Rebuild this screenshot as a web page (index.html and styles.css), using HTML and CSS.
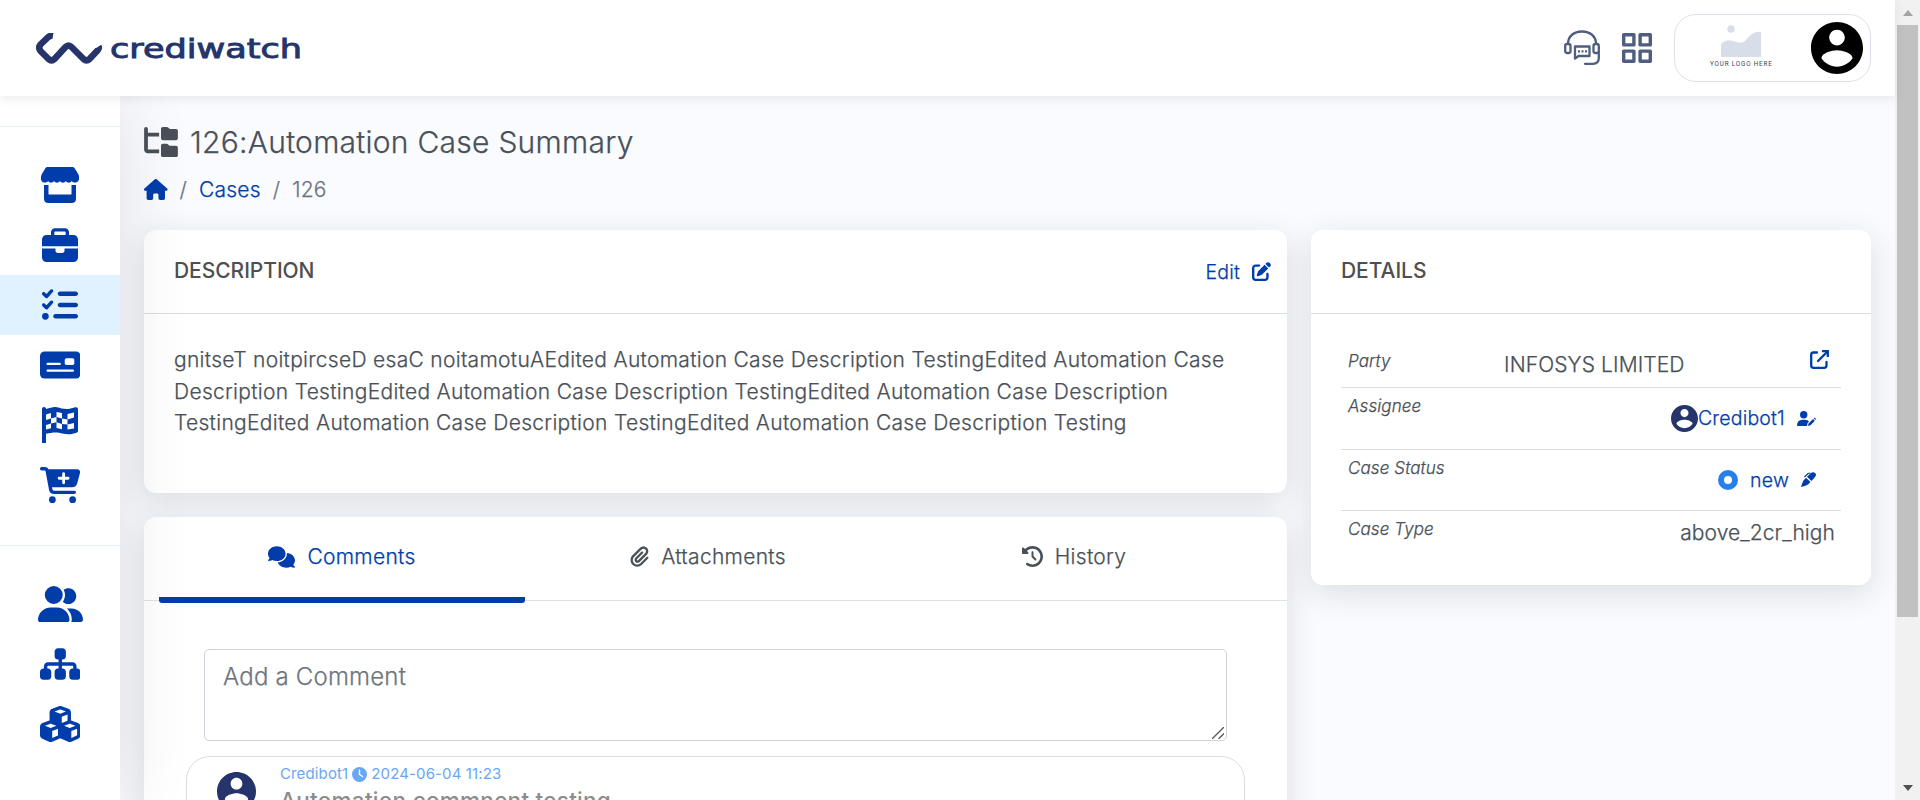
FILE: index.html
```html
<!DOCTYPE html>
<html lang="en">
<head>
<meta charset="utf-8">
<title>Crediwatch - Case 126</title>
<link rel="stylesheet" href="styles.css">
</head>
<body>
<svg class="defs" width="0" height="0">
  <symbol id="account" viewBox="2 2 20 20"><path d="M12 2C6.48 2 2 6.48 2 12s4.48 10 10 10 10-4.48 10-10S17.52 2 12 2zm0 3c1.66 0 3 1.34 3 3s-1.34 3-3 3-3-1.34-3-3 1.34-3 3-3zm0 14.2c-2.5 0-4.71-1.28-6-3.22.03-1.99 4-3.08 6-3.08 1.99 0 5.97 1.09 6 3.08-1.29 1.94-3.5 3.22-6 3.22z"/></symbol>
</svg>
<div class="window">
<div class="app">
  <header class="topbar">
    <a class="brand">
      <svg class="brand-mark" viewBox="0 0 66 31" fill="none" stroke="#25346a" stroke-width="6.5" stroke-linejoin="round"><path d="M17 2.8C14.5 2.4 13 3.2 11.5 4.7L4.5 11.5Q2 14.8 4.5 18L12.5 26Q15.5 28.6 18.500 26L29.500 14Q32.500 10.800 35.500 14L47.500 26Q50.500 28.600 53.500 26L61.500 17.500Q63.500 15 62.500 13.500"/></svg>
      <svg class="brand-name" viewBox="0 0 194 30"><text x="0" y="24.500" textLength="192" lengthAdjust="spacingAndGlyphs">crediwatch</text></svg>
    </a>
    <div class="tools">
      <svg class="tool-headset" viewBox="0 0 36 36" fill="none" stroke="#4f5e80" stroke-width="2.300"><path d="M4 14C4 6 10 1.500 18 1.500S32 6 32 14"/><rect x="1.200" y="14" width="5.300" height="9" rx="2"/><rect x="29.500" y="14" width="5.300" height="9" rx="2"/><path d="M34.800 22v6q0 5.800-6 5.800H21" stroke-linecap="round"/><path d="M11 16.500h14.500V26H14.500L11 28.500z" stroke-linejoin="round"/><path d="M14 21.300h2m1.500 0h2m1.500 0h2"/></svg>
      <svg class="tool-grid" viewBox="0 0 30 30" fill="none" stroke="#4f5e80" stroke-width="3.400" stroke-linejoin="round"><path d="M1.700 1.700h10.200v10.200H1.700zM18.100 1.700h10.200v10.200H18.100zM1.700 18.100h10.200v10.200H1.700zM18.100 18.100h10.200v10.200H18.100z"/></svg>
      <div class="profile">
        <div class="logo-slot">
          <svg viewBox="0 0 40 32" fill="#d8dee9"><circle cx="10" cy="4" r="3.700"/><path d="M0 32V19C4 15 8 14.500 12 16C17 17.500 21 19 25 15C30 9 34 6 40 7V32z"/></svg>
          <span>YOUR LOGO HERE</span>
        </div>
        <svg class="me"><use href="#account"/></svg>
      </div>
    </div>
  </header>
  <div class="body">
    <nav class="sidebar">
      <div class="group">
        <a><svg width="38" height="36" viewBox="0 0 38 36"><path d="M6.500 0h25q1.200 0 2 1l3.700 6q2 4 0 7c-1.400 2-5 2.300-6.500 0-1.200 2.200-4.700 2.200-5.900 0-1.200 2.200-4.700 2.200-5.900 0-1.200 2.200-4.700 2.200-5.900 0-1.200 2.200-4.700 2.200-5.900 0-1.500 2.300-5.200 2-6.500 0q-1.700-3 .3-7l3.600-6q.8-1 2-1z"/><path d="M3 18h4.500v9.500h23V18H35v13.500q0 4.500-4.500 4.500h-23Q3 36 3 31.500z"/></svg></a>
        <a><svg width="36" height="34" viewBox="0 0 512 480"><path d="M184 48H328c4.400 0 8 3.600 8 8V96H176V56c0-4.400 3.600-8 8-8zm-56 8V96H64C28.700 96 0 124.700 0 160v96H512V160c0-35.300-28.700-64-64-64H384V56c0-30.900-25.100-56-56-56H184c-30.900 0-56 25.100-56 56zM512 288H320v32c0 17.700-14.300 32-32 32H224c-17.700 0-32-14.300-32-32V288H0V416c0 35.300 28.700 64 64 64H448c35.300 0 64-28.700 64-64V288z"/></svg></a>
        <a class="active"><svg width="36" height="36" viewBox="0 0 512 512"><path d="M152.100 38.200c9.900 8.900 10.700 24 1.800 33.900l-72 80c-4.400 4.900-10.600 7.800-17.200 7.900s-12.900-2.400-17.600-7L7 113C-2.300 103.600-2.300 88.400 7 79s24.600-9.400 33.900 0l22.100 22.100 55.100-61.200c8.900-9.900 24-10.700 33.900-1.800zm0 160c9.900 8.900 10.700 24 1.800 33.900l-72 80c-4.400 4.900-10.600 7.800-17.200 7.900s-12.900-2.400-17.600-7L7 273c-9.400-9.400-9.400-24.600 0-33.900s24.600-9.400 33.900 0l22.100 22.100 55.100-61.200c8.900-9.900 24-10.700 33.900-1.800zM224 96c0-17.700 14.300-32 32-32H480c17.700 0 32 14.300 32 32s-14.300 32-32 32H256c-17.700 0-32-14.300-32-32zm0 160c0-17.700 14.300-32 32-32H480c17.700 0 32 14.300 32 32s-14.300 32-32 32H256c-17.700 0-32-14.300-32-32zM160 416c0-17.700 14.300-32 32-32H480c17.700 0 32 14.300 32 32s-14.300 32-32 32H192c-17.700 0-32-14.300-32-32zM48 368a48 48 0 1 1 0 96 48 48 0 1 1 0-96z"/></svg></a>
        <a><svg width="40.500" height="36" viewBox="0 0 576 512"><rect y="64" width="576" height="384" rx="64"/><g fill="#fff"><rect x="352" y="160" width="136" height="96" rx="24"/><rect x="92" y="224" width="204" height="32" rx="16"/><rect x="92" y="320" width="392" height="32" rx="16"/></g></svg></a>
        <a><svg width="36" height="36" viewBox="0 0 36 36"><path d="M0 1.500Q0 0 2 0T4 1.500V2C9 1 11-.5 15 .3C20 1.500 25 3.500 33 .3Q36-.3 36 2V24Q36 25 35 25.500C28 28.500 22 27 17 25.800C12 25 9 26 4 26.800V36H0z"/><g fill="#fff"><path d="M4 7.500L9 6V11.500L4 13zM14.500 5L20 6V11.500L14.500 10zM25.500 7L32 5.500V10.500L25.500 12.500zM9 11.500L14.500 10V15.300L9 16.500zM20 11.500L25.500 12.500V17.500L20 17zM4 18L9 16.500V21.200L4 22.500zM14.500 15.300L20 17V22.300L14.500 21zM25.500 17.500L32 16V21.500L25.500 22.500z"/></g></svg></a>
        <a><svg width="40.500" height="36" viewBox="0 0 576 512"><path d="M0 24C0 10.700 10.700 0 24 0H69.500c22 0 41.500 12.800 50.600 32h411c26.300 0 45.500 25 38.600 50.400l-41 152.300c-8.500 31.400-37 53.300-69.500 53.300H170.700l5.400 28.500c2.200 11.300 12.100 19.500 23.600 19.500H488c13.300 0 24 10.700 24 24s-10.700 24-24 24H199.700c-34.600 0-64.300-24.600-70.700-58.500L77.400 54.500c-.7-3.800-4-6.500-7.900-6.500H24C10.700 48 0 37.300 0 24zM128 464a48 48 0 1 1 96 0 48 48 0 1 1-96 0zm336-48a48 48 0 1 1 0 96 48 48 0 1 1 0-96zM252 160c0 11 9 20 20 20h44v44c0 11 9 20 20 20s20-9 20-20V180h44c11 0 20-9 20-20s-9-20-20-20H356V96c0-11-9-20-20-20s-20 9-20 20v44H272c-11 0-20 9-20 20z"/></svg></a>
      </div>
      <div class="group">
        <a><svg width="45" height="36" viewBox="0 0 640 512"><path d="M96 128a128 128 0 1 1 256 0A128 128 0 1 1 96 128zM0 482.300C0 383.800 79.800 304 178.300 304h91.400C368.200 304 448 383.800 448 482.300c0 16.400-13.300 29.700-29.700 29.700H29.700C13.300 512 0 498.700 0 482.300zM609.300 512H471.400c5.400-9.400 8.600-20.300 8.600-32v-8c0-60.700-27.100-115.200-69.800-151.800c2.400-.1 4.700-.2 7.100-.2h61.400C567.800 320 640 392.200 640 481.300c0 17-13.800 30.700-30.700 30.700zM432 256c-31 0-59-12.600-79.300-32.900C372.400 196.500 384 163.600 384 128c0-26.800-6.600-52.100-18.300-74.300C384.300 40.100 407.200 32 432 32c61.900 0 112 50.100 112 112s-50.100 112-112 112z"/></svg></a>
        <a><svg width="40.500" height="36" viewBox="0 0 576 512"><path d="M208 80c0-26.500 21.500-48 48-48h64c26.500 0 48 21.500 48 48v64c0 26.500-21.500 48-48 48h-8v40H464c30.900 0 56 25.100 56 56v32h8c26.500 0 48 21.500 48 48v64c0 26.500-21.500 48-48 48H464c-26.500 0-48-21.500-48-48V368c0-26.500 21.500-48 48-48h8V288c0-4.400-3.600-8-8-8H312v40h8c26.500 0 48 21.500 48 48v64c0 26.500-21.500 48-48 48H256c-26.500 0-48-21.500-48-48V368c0-26.500 21.500-48 48-48h8V280H112c-4.400 0-8 3.600-8 8v32h8c26.500 0 48 21.500 48 48v64c0 26.500-21.500 48-48 48H48c-26.500 0-48-21.500-48-48V368c0-26.500 21.500-48 48-48h8V288c0-30.900 25.100-56 56-56H264V192h-8c-26.500 0-48-21.500-48-48V80z"/></svg></a>
        <a><svg width="40.500" height="36" viewBox="0 0 576 512"><path d="M290.800 48.600l78.400 29.700L288 109.500 206.800 78.300l78.400-29.700c1.800-.7 3.800-.7 5.700 0zM136 92.500V204.700c-1.300 .4-2.600 .8-3.900 1.300l-96 36.400C14.400 250.600 0 271.500 0 294.700V413.900c0 22.200 13.100 42.300 33.500 51.300l96 42.200c14.400 6.300 30.700 6.300 45.100 0L288 457.500l113.500 49.900c14.400 6.300 30.700 6.300 45.100 0l96-42.200c20.300-8.900 33.500-29.100 33.500-51.300V294.700c0-23.300-14.400-44.100-36.100-52.400l-96-36.400c-1.300-.5-2.600-.9-3.900-1.300V92.500c0-23.300-14.400-44.100-36.100-52.400l-96-36.400c-12.800-4.800-26.900-4.800-39.700 0l-96 36.400C150.400 48.400 136 69.300 136 92.500zM392 210.600l-82.400 31.200V152.600L392 121v89.600zM154.800 250.900l78.400 29.700L152 311.700 70.800 280.600l78.400-29.700c1.800-.7 3.800-.7 5.700 0zm18.800 204.400V354.800L256 323.200v95.900l-82.400 36.200zM421.200 250.900c1.800-.7 3.800-.7 5.700 0l78.400 29.700L424 311.700l-81.200-31.100 78.400-29.700zM523.200 421.200l-77.600 34.100V354.800L528 323.200v90.700c0 3.200-1.900 6-4.800 7.300z"/></svg></a>
      </div>
    </nav>
    <main class="main">
      <h1 class="title">
        <svg width="34" height="30" viewBox="0 0 576 512"><path d="M64 32C64 14.300 49.700 0 32 0S0 14.300 0 32v96V384c0 35.300 28.700 64 64 64H256V384H64V160H256V96H64V32zM288 192c0 17.700 14.300 32 32 32H544c17.700 0 32-14.300 32-32V64c0-17.700-14.300-32-32-32H445.300c-8.500 0-16.600-3.400-22.600-9.400L409.400 9.400c-6-6-14.100-9.400-22.600-9.400H320c-17.700 0-32 14.300-32 32V192zm0 288c0 17.700 14.300 32 32 32H544c17.700 0 32-14.300 32-32V352c0-17.700-14.300-32-32-32H445.300c-8.500 0-16.600-3.400-22.600-9.400l-13.300-13.300c-6-6-14.100-9.400-22.600-9.400H320c-17.700 0-32 14.300-32 32V480z"/></svg>
        <span>126:Automation Case Summary</span>
      </h1>
      <div class="crumbs">
        <svg width="23.600" height="21" viewBox="0 0 576 512"><path d="M575.800 255.500c0 18-15 32.100-32 32.100h-32l.7 160.200c0 2.700-.2 5.400-.5 8.100V472c0 22.100-17.900 40-40 40H392c-22.100 0-40-17.900-40-40V384c0-17.700-14.300-32-32-32H256c-17.700 0-32 14.300-32 32v88c0 22.100-17.900 40-40 40H104c-22.100 0-40-17.900-40-40V287.600H32c-18 0-32-14-32-32.100c0-9 3-17 10-24L266.400 8c7-7 15-8 22-8s15 2 21 7L564.800 231.500c8 7 12 15 11 24z"/></svg>
        <span>/</span><a>Cases</a><span>/</span><span>126</span>
      </div>
      <div class="columns">
        <div class="left">
          <section class="card description">
            <div class="card-head"><h2>DESCRIPTION</h2>
              <a class="edit">Edit <svg width="19" height="19" viewBox="0 0 512 512"><path d="M471.600 21.700c-21.900-21.900-57.300-21.900-79.200 0L362.300 51.700l97.900 97.900 30.100-30.100c21.900-21.900 21.900-57.300 0-79.200L471.600 21.700zm-299.200 220c-6.100 6.100-10.800 13.600-13.500 21.900l-29.600 88.800c-2.900 8.600-.6 18.100 5.800 24.600s15.900 8.700 24.600 5.800l88.800-29.600c8.200-2.700 15.700-7.400 21.900-13.500L437.700 172.300 339.700 74.300 172.400 241.700zM96 64C43 64 0 107 0 160V416c0 53 43 96 96 96H352c53 0 96-43 96-96V320c0-17.700-14.300-32-32-32s-32 14.300-32 32v96c0 17.700-14.300 32-32 32H96c-17.700 0-32-14.300-32-32V160c0-17.700 14.300-32 32-32h96c17.700 0 32-14.300 32-32s-14.300-32-32-32H96z"/></svg></a>
            </div>
            <p>gnitseT noitpircseD esaC noitamotuAEdited Automation Case Description TestingEdited Automation Case<br>Description TestingEdited Automation Case Description TestingEdited Automation Case Description<br>TestingEdited Automation Case Description TestingEdited Automation Case Description Testing</p>
          </section>
          <section class="card activity">
            <div class="tabs">
              <a class="tab current"><svg width="27" height="22" viewBox="0 0 640 512"><path d="M208 352c114.900 0 208-78.800 208-176S322.900 0 208 0S0 78.800 0 176c0 38.600 14.700 74.300 39.600 103.400c-3.500 9.400-8.700 17.700-14.200 24.700c-4.800 6.200-9.700 11-13.300 14.300c-1.800 1.600-3.300 2.900-4.300 3.700c-.5 .4-.9 .7-1.100 .8l-.2 .2C1 327.200-1.400 334.400 .8 340.900S9.100 352 16 352c21.800 0 43.800-5.600 62.100-12.500c9.200-3.500 17.800-7.400 25.200-11.400C134.100 343.300 169.800 352 208 352zM448 176c0 112.300-99.100 196.900-216.500 207C255.800 457.400 336.400 512 432 512c38.200 0 73.900-8.700 104.700-23.900c7.500 4 16 7.900 25.200 11.400c18.300 6.900 40.300 12.500 62.100 12.500c6.900 0 13.100-4.500 15.200-11.100c2.100-6.600-.2-13.800-5.800-17.900l-.2-.2c-.2-.2-.6-.4-1.100-.8c-1-.8-2.500-2-4.300-3.700c-3.600-3.300-8.500-8.100-13.300-14.300c-5.500-7-10.700-15.400-14.200-24.700c24.900-29 39.600-64.700 39.600-103.400c0-92.800-84.900-168.900-192.600-175.500c.4 5.100 .6 10.300 .6 15.500z"/></svg><span>Comments</span></a>
              <a class="tab"><svg width="19" height="21" viewBox="0 0 448 512"><path d="M364.200 83.800c-24.400-24.400-64-24.400-88.400 0l-184 184c-42.100 42.100-42.100 110.300 0 152.400s110.300 42.100 152.400 0l152-152c10.900-10.900 28.700-10.900 39.600 0s10.900 28.700 0 39.600l-152 152c-64 64-167.600 64-231.600 0s-64-167.600 0-231.600l184-184c46.300-46.300 121.300-46.300 167.600 0s46.300 121.300 0 167.600l-176 176c-28.600 28.600-75 28.600-103.600 0s-28.600-75 0-103.600l144-144c10.900-10.900 28.700-10.900 39.600 0s10.900 28.700 0 39.600l-144 144c-6.700 6.700-6.700 17.700 0 24.400s17.700 6.700 24.400 0l176-176c24.400-24.400 24.400-64 0-88.400z"/></svg><span>Attachments</span></a>
              <a class="tab"><svg width="21" height="21" viewBox="0 0 512 512"><path d="M75 75L41 41C25.900 25.900 0 36.600 0 57.900V168c0 13.300 10.700 24 24 24H134.100c21.400 0 32.100-25.900 17-41l-30.800-30.800C155 85.500 203 64 256 64c106 0 192 86 192 192s-86 192-192 192c-40.800 0-78.600-12.700-109.700-34.400c-14.500-10.100-34.400-6.600-44.600 7.900s-6.600 34.400 7.900 44.600C151.200 495 201.700 512 256 512c141.400 0 256-114.600 256-256S397.400 0 256 0C185.300 0 121.300 28.700 75 75zm181 53c-13.300 0-24 10.700-24 24V256c0 6.400 2.500 12.500 7 17l72 72c9.400 9.400 24.600 9.400 33.900 0s9.400-24.600 0-33.900l-65-65V152c0-13.300-10.700-24-24-24z"/></svg><span>History</span></a>
            </div>
            <div class="comment-input"><span>Add a Comment</span><svg width="12" height="12" viewBox="0 0 12 12" stroke="#555" stroke-width="1.300"><path d="M0 12L12 0M6.500 12L12 6.500"/></svg></div>
            <div class="comment">
              <svg class="avatar"><use href="#account"/></svg>
              <div>
                <div class="meta">Credibot1 <svg width="15" height="15" viewBox="0 0 15 15"><circle cx="7.500" cy="7.500" r="7.500" fill="#68a7f5"/><path d="M7.500 3v4.500l3 2" fill="none" stroke="#fff" stroke-width="1.400" stroke-linecap="round"/></svg> 2024-06-04 11:23</div>
                <div class="message">Automation commnent testing</div>
              </div>
            </div>
          </section>
        </div>
        <section class="card details">
          <div class="card-head"><h2>DETAILS</h2></div>
          <div class="rows">
            <div class="row party"><em>Party</em><span>INFOSYS LIMITED</span><svg width="19" height="19" viewBox="0 0 19 19" fill="none" stroke="#003dab" stroke-width="2.300" stroke-linecap="round" stroke-linejoin="round"><path d="M7 2.500H3.500Q1.200 2.500 1.200 4.800V15.500Q1.200 17.800 3.500 17.800H14.200Q16.500 17.800 16.500 15.500V12"/><path d="M8 11L16.500 2.500"/><path d="M12 1.200H17.800V7" stroke-linecap="butt" stroke-linejoin="miter"/></svg></div>
            <div class="row assignee"><em>Assignee</em><a><svg class="avatar"><use href="#account"/></svg>Credibot1<svg class="pen" width="19" height="15" viewBox="0 0 19 15"><circle cx="6.700" cy="3.700" r="3.700"/><path d="M0 15Q0 8.800 5.500 8.800H8Q11 8.800 12 10.500L10.500 12.300 10 15zM11.500 12.500L16 8 17.800 9.800 13.500 14.300 11 15zM16.700 7.300L17.600 6.600 19 8 18.500 9z"/></svg></a></div>
            <div class="row status"><em>Case Status</em><a><i class="dot"></i>new<svg class="pen" width="15" height="15" viewBox="0 0 15 15"><path d="M9.500 1.500Q12-.5 14 1T14 5L10.500 9 6 4.800z"/><path d="M5 5.800L9.500 10 7 12.500Q4 14 0 15Q1 11 2.500 8.500z"/><path d="M3.500 5L7 1.500 9.500 1" fill="none" stroke="#003dab" stroke-width="1.200"/></svg></a></div>
            <div class="row type"><em>Case Type</em><span>above_2cr_high</span></div>
          </div>
        </section>
      </div>
    </main>
  </div>
</div>
<div class="scrollbar"><i class="up"></i><div class="thumb"></div><i class="down"></i></div>
</div>
</body>
</html>
```
FILE: styles.css
```css
* { box-sizing: border-box; }
html { height: 800px; overflow: hidden; }
body { margin: 0; height: 800px; overflow: hidden; font-family: Inter, "Liberation Sans", sans-serif; font-size: 21px; font-weight: 300; letter-spacing: .2px; color: #495057; background: #fafbff; }
h1, h2, p { margin: 0; font-weight: 300; }
svg { display: block; flex: none; fill: currentColor; }
svg[fill="none"] { fill: none; }
.defs { position: absolute; }
.window { display: flex; height: 800px; overflow: hidden; }
.app { flex: 1; display: flex; flex-direction: column; min-width: 0; }

.topbar { height: 96px; flex: none; background: #fff; display: flex; justify-content: space-between; align-items: center; padding: 0 24px 0 36px; position: relative; z-index: 3; box-shadow: 0 3px 10px rgba(0, 0, 0, .08); }
.brand { display: flex; align-items: center; gap: 8px; letter-spacing: 0; font-weight: 400; }
.brand-mark { width: 66px; height: 31px; fill: none; }
.brand-name { width: 194px; height: 30px; overflow: visible; font-family: "DejaVu Sans", sans-serif; font-size: 26px; fill: #25346a; stroke: #25346a; stroke-width: .9px; }
.tools { display: flex; align-items: center; }
.tool-headset { width: 36px; height: 36px; margin-right: 22px; }
.tool-grid { width: 30px; height: 30px; margin-right: 22px; }
.profile { width: 197px; height: 68px; border: 1px solid #dfe1ea; border-radius: 22px; display: flex; align-items: center; justify-content: space-between; padding: 0 7px 0 35px; }
.logo-slot { display: flex; flex-direction: column; align-items: center; gap: 3px; padding-bottom: 3px; }
.logo-slot svg { width: 40px; height: 32px; fill: #d8dee9; }
.logo-slot span { font: 400 6.300px/8px Roboto, sans-serif; letter-spacing: .85px; white-space: nowrap; color: #3c4450; }
.me { width: 52px; height: 52px; fill: #000; }

.body { flex: 1; display: flex; min-height: 0; overflow: hidden; }
.sidebar { width: 120px; flex: none; background: #fff; padding-top: 30px; position: relative; z-index: 2; box-shadow: 0 0 75px rgba(30, 35, 45, .12); color: #003dab; }
.group { border-top: 1px solid #e0f2ff; padding: 28px 0 30px; }
.group + .group { padding-top: 28px; }
.group a { height: 60px; display: flex; align-items: center; justify-content: center; }
.group .active { background: #e0f2ff; }

.main { flex: 1; padding: 28px 24px 0; min-width: 0; -webkit-text-stroke-width: .25px; }
.title { display: flex; align-items: center; gap: 12px; height: 36px; font-size: 30px; letter-spacing: .26px; }
.crumbs { display: flex; align-items: center; gap: 12px; height: 32px; margin-top: 13px; color: #6c757d; }
.crumbs svg, .crumbs a { color: #003dab; }
.columns { display: flex; gap: 24px; margin-top: 25px; align-items: flex-start; }
.left { width: 1143px; display: flex; flex-direction: column; gap: 24px; }
.card { background: #fff; border-radius: 12px; box-shadow: 0 8px 32px rgba(30, 35, 45, .14); }
.card-head { height: 84px; border-bottom: 1px solid #dcdde0; display: flex; justify-content: space-between; align-items: center; padding: 0 16px 2px 30px; }
.card-head h2 { font-size: 21px; font-weight: 500; color: #4f4f4f; letter-spacing: -.05px; -webkit-text-stroke-width: 0; }
.edit { display: flex; align-items: center; gap: 12px; font-size: 19.500px; color: #003dab; padding-top: 2px; }
.description { height: 263px; }
.description p { padding: 30px; line-height: 31.500px; letter-spacing: .3px; white-space: nowrap; }

.activity { height: 420px; }
.tabs { display: grid; grid-template-columns: repeat(3, 1fr); padding: 0 30px 0 15px; height: 84px; border-bottom: 1px solid #dee2e6; letter-spacing: .3px; }
.tab { display: flex; align-items: center; justify-content: center; gap: 12px; height: 86px; padding-bottom: 1px; border-bottom: 6px solid transparent; }
.current { color: #003dab; background: linear-gradient(#003dab, #003dab) no-repeat 0 100% / 100% 6px border-box; border-radius: 3px; }
.comment-input { display: flex; justify-content: space-between; align-items: flex-end; margin: 48px 60px 0; height: 92px; border: 1px solid #ced4da; border-radius: 5px; padding: 0 2px 1px 18px; font-size: 24px; color: #6c757d; }
.comment-input span { align-self: flex-start; line-height: 30px; margin-top: 12px; }
.comment { display: flex; gap: 24px; margin: 15px 42px 0; height: 150px; border: 1px solid #dcdde0; border-radius: 24px; padding: 8px 30px; -webkit-text-stroke-width: 0; }
.comment .avatar { width: 39px; height: 39px; margin-top: 7px; color: #25346a; }
.meta { display: flex; align-items: center; gap: 4px; font-size: 15px; line-height: 18px; font-weight: 400; letter-spacing: .13px; color: #68a7f5; }
.message { font-size: 22.500px; font-weight: 500; letter-spacing: .27px; color: #8c8c8c; margin-top: 5px; line-height: 26px; }

.details { width: 560px; height: 355px; }
.rows { padding: 19px 30px; }
.row { display: flex; justify-content: space-between; padding: 0 6px 0 7px; border-bottom: 1px solid #dcdde0; height: 61.500px; }
.row:last-child { border: 0; }
.row em { font-size: 17px; line-height: 20px; letter-spacing: .1px; margin-top: 8px; }
.row a { display: flex; align-items: center; font-size: 19.500px; color: #003dab; padding-right: 19px; }
.party { height: 55px; padding-right: 12px; }
.row.party em { margin-top: 18px; }
.party span { line-height: 24px; margin: 20px 0 0 -12px; letter-spacing: .1px; }
.party svg { margin-top: 17px; }
.assignee .avatar { width: 27px; height: 27px; color: #25346a; }
.pen { margin-left: 12px; }
.dot { width: 20px; height: 20px; border: 6.500px solid #2680eb; border-radius: 50%; margin-right: 12px; }
.type span { line-height: 24px; margin-top: 10px; letter-spacing: .08px; }

.scrollbar { width: 25px; flex: none; background: #f1f1f1; display: flex; flex-direction: column; align-items: center; justify-content: space-between; padding: 10px 0 9px; }
.thumb { width: 21px; height: 592px; background: #c1c1c1; margin-bottom: auto; margin-top: 9px; }
.up, .down { border: 5.500px solid transparent; }
.up { border-top: 0; border-bottom: 6px solid #a3a3a3; }
.down { border-bottom: 0; border-top: 6px solid #505050; }
```
